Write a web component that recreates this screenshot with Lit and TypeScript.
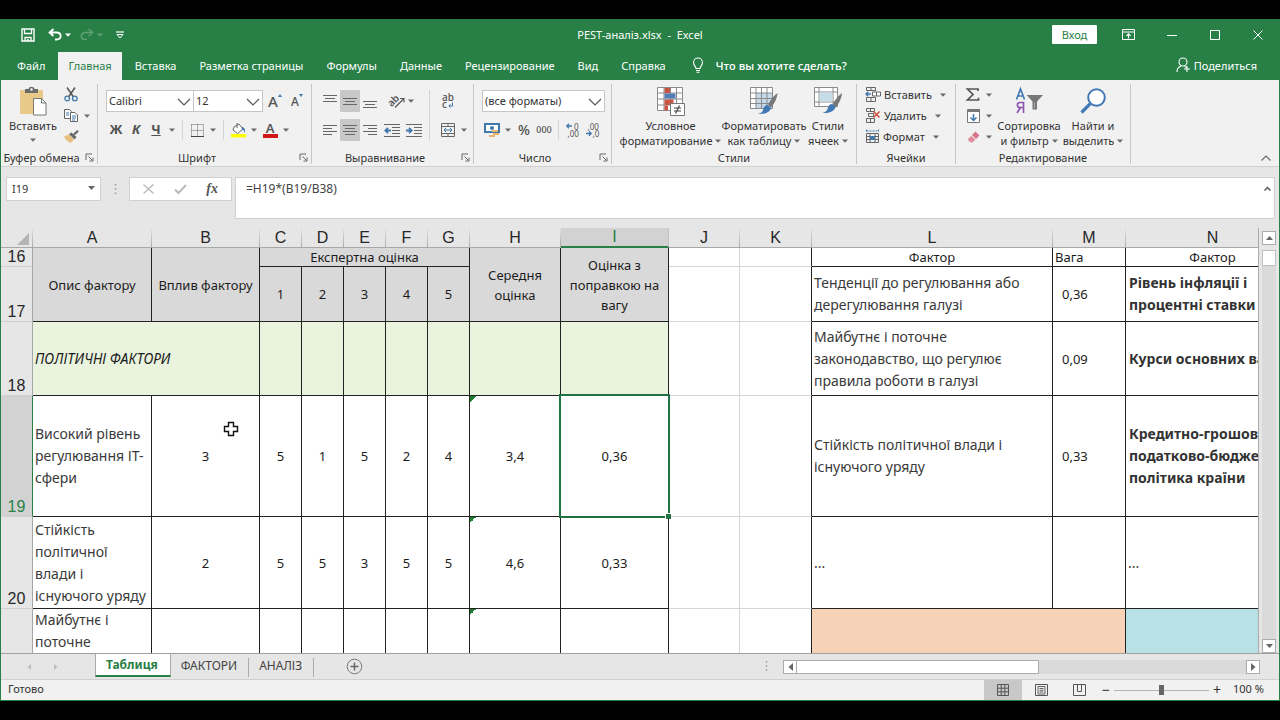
import { LitElement, html, svg, css, nothing } from "lit";
import type { TemplateResult } from "lit";
import { classMap } from "lit/directives/class-map.js";

const icon = (w: number, h: number, body: unknown) =>
  html`<svg class="icon" width=${w} height=${h} viewBox="0 0 ${w} ${h}" fill="none" aria-hidden="true">${body}</svg>`;

const caret = icon(6, 4, svg`<path d="M0 .5h6L3 3.8z" fill="#6a6a6a"/>`);
const caretLight = icon(6, 4, svg`<path d="M0 .5h6L3 3.8z" fill="#fff"/>`);
const caretDim = icon(6, 4, svg`<path d="M0 .5h6L3 3.8z" fill="#5f9f75"/>`);
const chevron = icon(14, 8, svg`<path d="M1 1l6 6 6-6" stroke="#555" stroke-width="1.2"/>`);
const launcher = icon(9, 9, svg`<path d="M1 7V1h6M3.5 3.5l4 4M8 4.500V8H4.500" stroke="#666"/>`);

const I = {
  save: icon(14, 14, svg`<path d="M1 1h12v12H1z" stroke="#fff" stroke-width="1.400"/><path d="M3.500 1v4.500h7V1M4 13V9.500h6V13" stroke="#fff" stroke-width="1.300"/><path d="M6 11h1.500v2H6z" fill="#fff"/>`),
  undo: icon(14, 13, svg`<path d="M5.500 1L1.500 4.500l4 3.500M2 4.500h6.500c5.500 0 5.500 7 0 7H7" stroke="#fff" stroke-width="1.800"/>`),
  redo: icon(14, 13, svg`<path d="M8.500 1l4 3.500-4 3.500M12 4.500H5.500c-5.500 0-5.500 7 0 7H7" stroke="#5f9f75" stroke-width="1.600"/>`),
  custom: icon(8, 8, svg`<path d="M0 1h8" stroke="#fff" stroke-width="1.200"/><path d="M1 3.500h6L4 7z" stroke="#fff"/>`),
  ribbonOpt: icon(13, 11, svg`<path d="M.5.5h12v10H.5zM.5 3h12" stroke="#fff"/><path d="M6.500 9.500V5M4.500 6.800l2-2 2 2" stroke="#fff" stroke-width="1.200"/>`),
  min: icon(10, 10, svg`<path d="M0 5.500h10" stroke="#fff"/>`),
  max: icon(10, 10, svg`<path d="M.5.5h9v9h-9z" stroke="#fff"/>`),
  close: icon(10, 10, svg`<path d="M.5.5l9 9M9.500.5l-9 9" stroke="#fff"/>`),
  bulb: icon(12, 16, svg`<path d="M4 11.500c0-2-2.500-3-2.500-6a4.500 4.500 0 019 0c0 3-2.500 4-2.500 6zM4 13.500h4M4.500 15.300h3" stroke="#fff" stroke-width="1.100"/>`),
  share: icon(15, 16, svg`<circle cx="7" cy="5" r="4" stroke="#fff" stroke-width="1.100"/><path d="M1 15c0-3 1.500-5 4-6M8.500 9.500l2 1M11 9v6M8 12h6" stroke="#fff" stroke-width="1.100"/>`),
  paste: icon(28, 30, svg`<path d="M1 4h23v24H1z" fill="#e8c98a"/><path d="M6 3h3.500c.5-3 5.500-3 6 0H19v4H6z" fill="#6b6b6b"/><circle cx="12.500" cy="3.500" r="1.200" fill="#fff"/><path d="M14.500 12.500h8l4.500 4.500v12H14.500z" fill="#fff" stroke="#777"/><path d="M22.500 12.500V17H27" stroke="#777"/>`),
  cut: icon(14, 15, svg`<path d="M3 .5l6.500 9.500M11 .5L4.500 10" stroke="#555" stroke-width="1.500"/><circle cx="3.200" cy="11.500" r="2.300" stroke="#4178ab" stroke-width="1.300"/><circle cx="10.800" cy="11.500" r="2.300" stroke="#4178ab" stroke-width="1.300"/>`),
  copy: icon(14, 13, svg`<path d="M.5.5h5l2 2v7h-7z" fill="#fff" stroke="#666"/><path d="M2 4h3M2 6h3" stroke="#4178ab"/><path d="M6.500 3.500h4.500l2.500 2.500v6.500h-7z" fill="#fff" stroke="#666"/><path d="M8 7h4M8 9h4M8 11h3" stroke="#4178ab"/>`),
  brush: icon(15, 13, svg`<path d="M0 6.500l5-2 5 5-3.500 3.500C3.500 11.500 1 9.500 0 6.500z" fill="#e8bf7c"/><path d="M5 4l2.500-1.500 5 4.500L10.500 9.500z" fill="#666"/><path d="M10 4.500L14 .8" stroke="#666" stroke-width="2.200"/>`),
  borders: icon(13, 13, svg`<path d="M.5.5h12M.5.5v11M12.500.5v11M6.500.5v11M.5 6.500h12" stroke="#666" stroke-dasharray="1 1"/><path d="M0 12.500h13" stroke="#444"/>`),
  fill: icon(17, 16, svg`<path d="M4 5l5-3 4 5-5.500 4.500L3 8z" fill="#fff" stroke="#666"/><path d="M7 6V1" stroke="#666"/><path d="M12 5c3 .5 3.500 3 2.500 6-.5-2.500-1-3.500-3-4z" fill="#4178ab"/><path d="M1 12h15v3.500H1z" fill="#ffff00"/>`),
  orient: icon(16, 14, svg`<g transform="rotate(-45 6 7)"><text x="-1" y="9" font-size="10" font-weight="600" fill="#555" font-family="Noto Sans, sans-serif">ab</text></g><path d="M6 13.500L14.500 5M11 4.500h4v4" stroke="#555" stroke-width="1.100"/>`),
  wrap: icon(14, 17, svg`<text x="1" y="8" font-size="10" font-weight="500" fill="#555" font-family="Noto Sans, sans-serif">ab</text><text x="1" y="15" font-size="10" font-weight="500" fill="#555" font-family="Noto Sans, sans-serif">c</text><path d="M11.500 9.500V13H8M9.500 11.300L7.800 13l1.700 1.700" stroke="#4178ab"/>`),
  merge: icon(14, 14, svg`<path d="M.5.5h13v13H.5zM.5 3.500h13M.5 10.500h13M7 .5v3M7 10.500v3" stroke="#666"/><path d="M3 7h8M5 5L3 7l2 2M9 5l2 2-2 2" stroke="#4178ab"/>`),
  money: icon(16, 15, svg`<path d="M1 1h14v8H1z" fill="#fff" stroke="#4178ab" stroke-width="2"/><circle cx="8" cy="5" r="2" fill="#4178ab"/><path d="M8 7h6v2H8zM9 10h6v2H9zM5 12h6v2H5z" fill="#e9b870"/>`),
  decInc: icon(14, 14, svg`<path d="M6 3H1M3 .8L.8 3 3 5.200" stroke="#4178ab" stroke-width="1.300"/><text x="8" y="6.500" font-size="8" fill="#555" font-family="Noto Sans, sans-serif">0</text><text x="1.500" y="13.500" font-size="8" fill="#555" font-family="Noto Sans, sans-serif">,00</text>`),
  decDec: icon(14, 14, svg`<text x="1.500" y="6.500" font-size="8" fill="#555" font-family="Noto Sans, sans-serif">,00</text><path d="M0 10.500h5M3 8.300l2.200 2.200L3 12.700" stroke="#4178ab" stroke-width="1.300"/><text x="6.500" y="13.500" font-size="8" fill="#555" font-family="Noto Sans, sans-serif">,0</text>`),
  cond: icon(28, 29, svg`<path d="M.5.5h25v23H.5zM7 .5v23M13.500.5v23M19.500.5v23M.5 6h25M.5 12h25M.5 18h25" fill="#fff" stroke="#8a8a8a"/><path d="M7.500 1h5.500v5H7.500zM7.500 12.500h9V18h-9z" fill="#c95444"/><path d="M7.500 6.500h11v5h-11z" fill="#4f7fb5"/><path d="M7.500 18.500h3.500v5H7.500z" fill="#c95444"/><path d="M13.500 16.500h14v12h-14z" fill="#fff" stroke="#777"/><path d="M17 21h7M17 24h7M22.500 18.500l-4 8" stroke="#444" stroke-width="1.200"/>`),
  fmtTable: icon(29, 28, svg`<path d="M.5.5h22v21H.5z" fill="#fff"/><path d="M6 6h17v16H6z" fill="#c5d9e8"/><path d="M.5.5h22v21H.5zM6 .5v21M11.500.5v21M17 .5v21M.5 6h22M.5 11.500h22M.5 16.500h22" stroke="#8a8a8a"/><path d="M27.500 6c-3 2-8 8-9.500 12l3 2.500C24 17 27 12 27.500 6z" fill="#777"/><path d="M17.500 18l3.500 3c-1 4-6 6.500-13 6 4-1 5-3 5.500-5.500.5-2 2-3.500 4-3.500z" fill="#4178b5"/>`),
  cellStyles: icon(29, 28, svg`<path d="M.5.5h23v19H.5zM5 .5v19M.5 5h23M.5 15h23M19 .5v19" fill="#fff" stroke="#8a8a8a"/><path d="M5.500 5.500h13v9h-13z" fill="#c5dde8"/><path d="M28 6c-3 2-8 8-9.500 12l3 2.500C24.500 17 27.500 12 28 6z" fill="#777"/><path d="M18 17l3.500 3c-1 4-6 6.500-13 6 4-1 5-3 5.500-5.500.5-2 2-3.500 4-3.500z" fill="#4178b5"/>`),
  insert: icon(16, 15, svg`<path d="M1.500.5h9v3h-9zM6 .5v3M1.500 10.500h9v4h-9zM6 10.500v4" stroke="#666"/><path d="M7.500 5h8v4h-8z" fill="#fff" stroke="#666"/><path d="M11.500 5v4" stroke="#666"/><path d="M6 7H1M3.200 4.700L1 7l2.200 2.300" stroke="#4178ab" stroke-width="1.400"/>`),
  remove: icon(16, 15, svg`<path d="M1.500.5h8v3h-8zM5.500.5v3M1.500 10.500h8v4h-8zM5.500 10.500v4M3.500 5.500h5v3h-5z" stroke="#666"/><path d="M8.500 3.500l6 6M14.500 3.500l-6 6" stroke="#cf4a3c" stroke-width="1.500"/>`),
  format: icon(15, 15, svg`<path d="M1.500 2h12M1.500.5v3M13.500.5v3" stroke="#4178ab" stroke-dasharray="2 1"/><path d="M1.500 4.500h12v9h-12zM5 4.500v9M10 4.500v9M1.500 7.500h12M1.500 10.500h12" stroke="#666"/><path d="M5 7h5v4H5z" fill="#4178ab"/>`),
  sum: icon(14, 13, svg`<path d="M12 3V1H1.500L7 6.500 1.500 12H12.500V9.800" stroke="#555" stroke-width="1.700"/>`),
  fillDown: icon(13, 14, svg`<path d="M.5.5h12v13H.5z" fill="#fff" stroke="#777"/><path d="M.5.5h12v2.500H.5z" fill="#777"/><path d="M6.500 5v6.500M3.500 8.500l3 3 3-3" stroke="#4178ab" stroke-width="1.500"/>`),
  eraser: icon(13, 12, svg`<path d="M8.500.5l4 4L9 8 5 4z" fill="#d9738a"/><path d="M4.300 4.700l4 4L5.500 11.500h-2L.5 8.500z" fill="#e08d9f"/>`),
  sort: icon(27, 26, svg`<path d="M.5 11.500L4.500 1l4 10.500M2 8h5" stroke="#4178b5" stroke-width="1.700"/><path d="M7.500 25V14.500H4c-3.500 0-3.500 5 0 5h3.500M4.500 19.500L1 25" stroke="#8a56b0" stroke-width="1.700"/><path d="M10.500 7H27l-6 6.500v8h-4.500v-8z" fill="#777"/><path d="M18.500 14v6" stroke="#aaa"/>`),
  find: icon(26, 26, svg`<circle cx="16.500" cy="9.500" r="8.300" fill="#fff" stroke="#4178b5" stroke-width="2"/><path d="M10.300 15.700L1.500 24.500" stroke="#4178b5" stroke-width="3.200"/>`),
  collapse: icon(10, 6, svg`<path d="M.5 5.500L5 1l4.500 4.500" stroke="#666" stroke-width="1.100"/>`),
  cancel: icon(11, 10, svg`<path d="M.5.5l10 9M10.500.5l-10 9" stroke="#bbb" stroke-width="1.400"/>`),
  accept: icon(13, 10, svg`<path d="M1 5.500l3.500 3.500L12 1" stroke="#bbb" stroke-width="2"/>`),
  plus: icon(17, 17, svg`<circle cx="8.500" cy="8.500" r="7.300" stroke="#777"/><path d="M8.500 4.500v8M4.500 8.500h8" stroke="#666" stroke-width="1.500"/>`),
  dots: icon(3, 11, svg`<path d="M1.500 0v11" stroke="#999" stroke-width="1.500" stroke-dasharray="1.500 2.700"/>`),
  left: icon(5, 8, svg`<path d="M5 0v8L.5 4z" fill="#666"/>`),
  right: icon(5, 8, svg`<path d="M0 0v8l4.500-4z" fill="#666"/>`),
  leftDim: icon(4, 6, svg`<path d="M4 0v6L.5 3z" fill="#bdbdbd"/>`),
  rightDim: icon(4, 6, svg`<path d="M0 0v6l3.500-3z" fill="#bdbdbd"/>`),
  up: icon(7, 4, svg`<path d="M0 4h7L3.500 0z" fill="#666"/>`),
  upOpen: icon(7, 5, svg`<path d="M.5 4.500l3-3 3 3" stroke="#555" stroke-width="1.500"/>`),
  down: icon(7, 4, svg`<path d="M0 0h7L3.500 4z" fill="#666"/>`),
  corner: icon(12, 12, svg`<path d="M12 0v12H0z" fill="#b5b5b5"/>`),
  normal: icon(12, 12, svg`<path d="M.5.5h11v11H.5zM4.200.5v11M7.800.5v11M.5 4.200h11M.5 7.800h11" stroke="#555"/>`),
  page: icon(13, 12, svg`<path d="M.5.5h12v11H.5z" stroke="#555"/><path d="M3 2.500h7v7.500H3zM4.500 4.500h4M4.500 6.300h4M4.500 8h4" stroke="#555" stroke-width=".9"/>`),
  breaks: icon(13, 12, svg`<path d="M.5.5h12v11H.5zM4.500.5v7M8.500.5v7M4.500 7.500h4" stroke="#555"/>`),
  cursor: icon(16, 16, svg`<path d="M5.500 1.500h5v4h4v5h-4v4h-5v-4h-4v-5h4z" fill="#fff" stroke="#111" stroke-width="1.400"/>`),
};

const lines = (spec: [number, number, number][]) =>
  icon(14, 13, spec.map(([y, x, w]) => svg`<path d="M${x} ${y + 0.5}h${w}" stroke="#666"/>`));
const alignTop = lines([[0, 0, 14], [3, 2, 10], [6, 0, 14]]);
const alignMid = lines([[3, 0, 14], [6, 2, 10], [9, 0, 14]]);
const alignBot = lines([[6, 0, 14], [9, 2, 10], [12, 0, 14]]);
const alignLeft = lines([[1, 0, 14], [4, 0, 9], [7, 0, 14], [10, 0, 9]]);
const alignCenter = lines([[1, 0, 14], [4, 2, 10], [7, 0, 14], [10, 2, 10]]);
const alignRight = lines([[1, 0, 14], [4, 5, 9], [7, 0, 14], [10, 5, 9]]);
const indent = (d: string) =>
  icon(16, 13, svg`<path d="M0 .5h16M8 3.500h8M8 6.500h8M8 9.500h8M0 12.500h16" stroke="#666"/><path d=${d} stroke="#4178ab" stroke-width="1.800"/>`);
const indentLess = indent("M7 6.500H1.500M4 3.800L1.300 6.500 4 9.200");
const indentMore = indent("M0 6.500h5.500M3 3.800l2.700 2.700L3 9.200");

interface Cell { t?: string[]; c?: string; cs?: number; rs?: number; extra?: "error" | "cursor" | "selected"; }
interface Row { n: string; h: string; cells: Cell[]; }

const gap: Cell[] = [{ c: "empty" }, { c: "empty edge" }];
const nums = (v: string[]): Cell[] => v.map((x) => ({ t: [x], c: "num" }));

const ROWS: Row[] = [
  { n: "16", h: "r16", cells: [
    { t: ["Опис фактору"], c: "head", rs: 2 }, { t: ["Вплив фактору"], c: "head", rs: 2 },
    { t: ["Експертна оцінка"], c: "head", cs: 5 },
    { t: ["Середня", "оцінка"], c: "head", rs: 2 }, { t: ["Оцінка з", "поправкою на", "вагу"], c: "head", rs: 2 },
    ...gap, { t: ["Фактор"], c: "num" }, { t: ["Вага"], c: "plain" }, { t: ["Фактор"], c: "num" }] },
  { n: "17", h: "r17", cells: [
    ...["1", "2", "3", "4", "5"].map((x) => ({ t: [x], c: "head" })), ...gap,
    { t: ["Тенденції до регулювання або", "дерегулювання галузі"], c: "long" }, { t: ["0,36"], c: "weight" },
    { t: ["Рівень інфляції і", "процентні ставки"], c: "long strong" }] },
  { n: "18", h: "r18", cells: [
    { t: ["ПОЛІТИЧНІ ФАКТОРИ"], c: "section", cs: 2 }, ...Array.from({ length: 7 }, () => ({ c: "section" })), ...gap,
    { t: ["Майбутнє і поточне", "законодавство, що регулює", "правила роботи в галузі"], c: "long" }, { t: ["0,09"], c: "weight" },
    { t: ["Курси основних валют"], c: "long strong" }] },
  { n: "19", h: "r19", cells: [
    { t: ["Високий рівень", "регулювання ІТ-", "сфери"], c: "long" }, { t: ["3"], c: "num", extra: "cursor" },
    ...nums(["5", "1", "5", "2", "4"]), { t: ["3,4"], c: "num", extra: "error" }, { t: ["0,36"], c: "num", extra: "selected" }, ...gap,
    { t: ["Стійкість політичної влади і", "існуючого уряду"], c: "long" }, { t: ["0,33"], c: "weight" },
    { t: ["Кредитно-грошова,", "податково-бюджетна", "політика країни"], c: "long strong" }] },
  { n: "20", h: "r20", cells: [
    { t: ["Стійкість", "політичної", "влади і", "існуючого уряду"], c: "long" }, { t: ["2"], c: "num" },
    ...nums(["5", "5", "3", "5", "5"]), { t: ["4,6"], c: "num", extra: "error" }, { t: ["0,33"], c: "num" }, ...gap,
    { t: ["..."], c: "long" }, {}, { t: ["..."], c: "long" }] },
  { n: "", h: "r21", cells: [
    { t: ["Майбутнє і", "поточне"], c: "long top" }, {}, {}, {}, {}, {}, {}, { extra: "error" }, {}, ...gap,
    { c: "peach", cs: 2 }, { c: "aqua" }] },
];

const COLS = ["A", "B", "C", "D", "E", "F", "G", "H", "I", "J", "K", "L", "M", "N"];
const TABS = ["Файл", "Главная", "Вставка", "Разметка страницы", "Формулы", "Данные", "Рецензирование", "Вид", "Справка"];

class AppRoot extends LitElement {
  static properties = { sheet: { state: true }, tab: { state: true } };
  declare sheet: string;
  declare tab: string;

  constructor() {
    super();
    this.sheet = "Таблиця";
    this.tab = "Главная";
  }

  static styles = css`
    :host { display: flex; flex-direction: column; box-sizing: border-box; height: 100vh; padding: 19px 0; background: #000;
      color: #333; font: 11px/15px "Noto Sans", "Open Sans", sans-serif; --green: #288046; --panel: #f1f1f1; --line: #c6c6c6; }
    *, *::before, *::after { box-sizing: border-box; }
    button, input, select, textarea { font: inherit; color: inherit; margin: 0; padding: 0; border: 0; background: none; border-radius: 0; outline: 0; }
    button { display: flex; align-items: center; justify-content: center; white-space: nowrap; }
    .icon { display: block; flex: none; overflow: visible; }
    .window { flex: 1; min-height: 0; display: flex; flex-direction: column; border: solid var(--green); border-width: 0 1px 1px; background: #e6e6e6; }

    .title { flex: none; height: 33px; display: grid; grid-template-columns: 1fr auto 1fr; align-items: center; background: var(--green); color: #fff; padding-bottom: 2px; }
    .quick { display: flex; align-items: center; padding-left: 20px; }
    .quick button { height: 24px; }
    .quick .q { width: 14px; }
    .quick .save { margin-right: 13px; }
    .quick .drop { width: 12px; }
    .quick .redo { margin-left: 6px; }
    .quick .custom { width: 12px; margin-left: 8px; }
    .name { white-space: pre; }
    .win { display: flex; justify-content: flex-end; align-items: center; }
    .win button { width: 43px; height: 28px; }
    .win .login { width: 45px; height: 19px; margin-right: 10px; background: #fff; color: var(--green); border-radius: 1px; }

    .tabs { flex: none; height: 28px; display: flex; align-items: stretch; gap: 3px; background: var(--green); color: #fff; padding: 0 22px 0 6px; }
    .tabs button { padding: 0 10px 2px; }
    .tabs .on { background: var(--panel); color: var(--green); }
    .tabs .tell { gap: 12px; padding-left: 13px; font-family: "Open Sans", sans-serif; font-weight: 600; }
    .tabs .share { margin-left: auto; padding: 0 0 2px; gap: 3px; }

    .ribbon { flex: none; display: flex; height: 87px; padding: 4px 0 2px; background: var(--panel); border-bottom: 1px solid #d0d0d0; }
    .group { flex: none; display: flex; flex-direction: column; border-right: 1px solid var(--line); }
    .body { flex: 1; display: flex; }
    .foot { flex: none; height: 13px; line-height: 13px; display: flex; text-align: center; }
    .foot span { flex: 1; }
    .foot button { width: 15px; height: 13px; }
    .clip { width: 97px; } .font { width: 214px; } .align { width: 162px; } .number { width: 138px; }
    .styles { width: 245px; } .cells { width: 99px; } .edit { width: 175px; }
    .rows { display: flex; flex-direction: column; gap: 7px; padding-top: 6px; }
    .row { display: flex; height: 22px; align-items: center; }
    .font .rows { padding-left: 8px; }
    .align .rows { padding-left: 8px; }
    .align .rows + .sep + .rows { padding-left: 4px; }
    .number .rows { padding-left: 8px; }
    .tool { width: 20px; height: 22px; }
    .drop { width: 12px; height: 22px; }
    .tool.on { background: #c8c8c8; }
    .tool.turn { width: 25px; justify-content: flex-end; }
    .tool.wide { width: 24px; }
    .sep { width: 1px; height: 20px; margin: 0 4px; background: #d4d4d4; }
    .sep.tall { height: 51px; margin: 6px 4px 0 5px; }
    .glyph { font-size: 13px; font-weight: 700; color: #505050; padding-bottom: 2px; }
    .italic { font-style: italic; }
    .under { text-decoration: underline; }
    .grow { font-size: 15px; font-weight: 500; color: #555; }
    .shrink { font-size: 12px; }
    .grow .icon { align-self: flex-start; margin-top: 4px; }
    .tint { flex-direction: column; font-size: 13px; font-weight: 600; line-height: 12px; color: #555; }
    .tint::after { content: ""; width: 15px; height: 4px; background: #d01818; }
    .pct { font-size: 14px; font-weight: 500; color: #505050; padding-bottom: 1px; }
    .thou { font-size: 9px; font-weight: 500; color: #505050; padding-bottom: 2px; }
    .combo { position: relative; display: flex; height: 22px; background: #fff; border: 1px solid var(--line); }
    .combo select { appearance: none; flex: 1; min-width: 0; padding: 0 20px 2px 2px; font-size: 11px; }
    .combo .icon { position: absolute; right: 2px; top: 7px; pointer-events: none; }
    .combo.face { width: 88px; } .combo.size { width: 70px; margin-left: -1px; } .combo.format { width: 123px; }

    .big { flex-direction: column; justify-content: flex-start; padding-top: 2px; color: #333; }
    .big .pic { height: 30px; margin-bottom: 2px; display: flex; align-items: center; }
    .big .line { display: flex; align-items: center; gap: 3px; }
    .big.paste { width: 56px; margin-left: 4px; }
    .big.paste .caret { height: 14px; display: flex; align-items: center; }
    .stack { display: flex; flex-direction: column; }
    .stack > div { display: flex; height: 21px; align-items: center; }
    .stack .text { justify-content: flex-start; gap: 3px; height: 21px; padding-bottom: 1px; }
    .stack .text + .drop { width: 14px; justify-content: flex-end; }
    .cells .stack { padding-left: 8px; }
    .edit .stack { padding-left: 7px; }
    .styles .body { padding-left: 7px; }
    .b1 { width: 103px; } .b2 { width: 84px; } .b3 { width: 44px; } .b4 { width: 68px; } .b5 { width: 60px; }
    .fold { margin: auto 7px 0 auto; width: 12px; height: 12px; }

    .formula { flex: none; display: flex; align-items: flex-start; padding: 10px 4px 9px 5px; }
    .namebox { position: relative; display: flex; width: 95px; height: 24px; background: #fff; border: 1px solid #d0d0d0; }
    .namebox input { width: 100%; padding: 0 0 2px 5px; }
    .namebox button { position: absolute; right: 2px; top: 0; width: 14px; height: 20px; }
    .grip { height: 24px; width: 28px; display: flex; align-items: center; justify-content: center; }
    .fx { display: flex; width: 103px; height: 24px; padding: 0 3px; background: #fff; border: 1px solid #d0d0d0; }
    .fx button { flex: 1; }
    .fx .fn { font: italic 700 14px "Liberation Serif", serif; color: #555; }
    .entry { flex: 1; display: flex; height: 42px; margin-left: 3px; background: #fff; border: 1px solid #d0d0d0; }
    .entry textarea { flex: 1; resize: none; padding: 2px 10px; font-size: 12px; line-height: 18px; color: #444; overflow: hidden; }
    .entry button { width: 14px; height: 20px; }

    .sheet { flex: 1; min-height: 0; display: flex; }
    .view { flex: 1; min-width: 0; overflow: hidden; border-right: 1px solid #ababab; }
    table { table-layout: fixed; width: 1299px; border-collapse: separate; border-spacing: 0; background: #fff; }
    td, th { padding: 0; border: solid #222; border-width: 0 1px 1px 0; white-space: nowrap; font-weight: 400; position: relative; text-align: left; vertical-align: middle; }
    .rh { width: 32px; } .ca { width: 119px; } .cb { width: 108px; } .c5 { width: 42px; } .ch { width: 91px; } .ci { width: 108px; }
    .cj { width: 71px; } .ck { width: 72px; } .cl { width: 241px; } .cm { width: 73px; } .cn { width: 174px; }
    thead th, tbody th { font-family: "Liberation Sans", sans-serif; font-size: 16px; line-height: 18px; color: #262626; text-align: center; background: #e6e6e6; }
    thead th { height: 20px; padding-top: 1px; border-color: #a6a6a6; border-image: linear-gradient(#e6e6e6, #a6a6a6) 1; }
    thead th .icon { margin: 2px 3px 0 auto; }
    tbody th { vertical-align: bottom; border-color: #a6a6a6; border-bottom-color: #d0d0d0; }
    thead th.cur { padding-top: 0; background: #d2d2d2; color: var(--green); border-image: none; border-bottom: 2px solid var(--green); border-right-color: #c0c0c0; }
    tbody th.cur { background: #d2d2d2; color: var(--green); border-right-color: var(--green); }
    .r16 { height: 19px; } .r17 { height: 55px; } .r18 { height: 74px; } .r19 { height: 121px; } .r20 { height: 92px; } .r21 { height: 92px; }
    td { font-size: 13px; line-height: 18px; color: #1c1c1c; }
    .head { background: #d9d9d9; text-align: center; line-height: 20px; }
    .r16 .head[colspan], .r16 td, .r16 th { line-height: 18px; }
    .r16 .head[rowspan] { line-height: 20px; }
    .num { text-align: center; }
    .plain { padding-left: 2px; }
    .weight { padding-left: 9px; }
    .long { font-size: 14px; line-height: 22px; padding-left: 2px; color: #3a3a3a; }
    .strong { font-weight: 700; padding-left: 3px; color: #333; }
    .top { vertical-align: top; }
    .section { background: #eaf3de; font-size: 14px; font-style: italic; padding-left: 2px; }
    .empty { border-color: #d6d6d6; }
    .edge { border-right-color: #222; }
    .peach { background: #f6d3b6; } .aqua { background: #b8e1e6; }
    .error::before { content: ""; position: absolute; left: 0; top: 0; width: 6px; height: 6px; background: linear-gradient(135deg, #1b7f2e 50%, transparent 50%); }
    .selected::before { content: ""; position: absolute; inset: -2px; border: 2px solid #217346; z-index: 1; }
    .selected::after { content: ""; position: absolute; right: -3px; bottom: -3px; width: 6px; height: 6px; background: #217346; border: solid #fff; border-width: 1px 0 0 1px; z-index: 2; }
    .cursor .icon { position: absolute; left: 71px; top: 25px; }
    .vbar { width: 20px; padding: 3px 3px 0; display: flex; flex-direction: column; }
    .vbar button, .hbar button { flex: none; width: 14px; height: 14px; background: #fff; border: 1px solid #ababab; }
    .vtrack { flex: 1; margin-top: 5px; background: #dadada; }
    .vthumb { height: 16px; background: #fff; border: 1px solid #c0c0c0; }

    .bottom { flex: none; height: 26px; display: flex; align-items: stretch; border-top: 1px solid #a0a0a0; font-size: 12px; color: #444; }
    .nav { width: 94px; display: flex; padding-left: 14px; }
    .nav button { width: 27px; }
    .bottom .name-tab { position: relative; height: 23px; padding: 0 12px 0 10px; }
    .bottom .name-tab::after { content: ""; position: absolute; right: 0; top: 4px; bottom: 0; width: 1px; background: #ababab; }
    .bottom .on { background: #fff; color: var(--green); font-weight: 700; border-bottom: 2px solid var(--green); border-right: 1px solid #ababab; border-left: 1px solid #ababab; }
    .bottom .on::after { content: none; }
    .add { width: 80px; }
    .hbar { margin-left: auto; width: 514px; padding-right: 19px; display: flex; align-items: center; }
    .hbar .hgrip { width: 18px; }
    .htrack { flex: 1; height: 14px; background: #dadada; }
    .hthumb { width: 242px; height: 14px; background: #fff; border: solid #ababab; border-width: 1px 1px 1px 0; }

    .status { flex: none; height: 21px; display: flex; align-items: stretch; background: var(--panel); border-top: 1px solid #d0d0d0; }
    .ready { margin: 0 auto 0 7px; line-height: 18px; }
    .status .mode { width: 38px; }
    .status .mode.on { background: #c8c8c8; }
    .status .zoom { width: 16px; font-size: 14px; padding-bottom: 2px; }
    .range { display: flex; align-items: center; width: 95px; }
    .range input { appearance: none; width: 100%; height: 12px; background: linear-gradient(#b5b5b5, #b5b5b5) center / 100% 1px no-repeat; }
    .range input::-webkit-slider-thumb { appearance: none; width: 5px; height: 10px; background: #666; }
    .percent { width: 54px; padding-left: 8px; line-height: 18px; }
  `;

  private drop(label: string) { return html`<button class="drop" aria-label=${label}>${caret}</button>`; }
  private tool(label: string, body: unknown, cls = "") { return html`<button class="tool ${cls}" aria-label=${label}>${body}</button>`; }
  private foot(label: string, launch = true) {
    return html`<div class="foot"><span>${label}</span>${launch ? html`<button aria-label="${label}: параметры">${launcher}</button>` : nothing}</div>`;
  }
  private combo(cls: string, label: string, value: string) {
    return html`<div class="combo ${cls}"><select aria-label=${label}><option>${value}</option></select>${chevron}</div>`;
  }
  private big(cls: string, pic: TemplateResult, a: string, b: string) {
    return html`<button class="big ${cls}"><span class="pic">${pic}</span><span class="line">${a}</span><span class="line">${b}${caret}</span></button>`;
  }

  private renderRibbon() {
    const sizeUp = icon(4, 3, svg`<path d="M0 3h4L2 0z" fill="#4178ab"/>`);
    const sizeDown = icon(4, 3, svg`<path d="M0 0h4L2 3z" fill="#4178ab"/>`);
    return html`<div class="ribbon">
      <div class="group clip"><div class="body">
        <button class="big paste"><span class="pic">${I.paste}</span><span class="line">Вставить</span><span class="caret">${caret}</span></button>
        <div class="stack">
          <div>${this.tool("Вырезать", I.cut)}</div>
          <div>${this.tool("Копировать", I.copy)}${this.drop("Варианты копирования")}</div>
          <div>${this.tool("Формат по образцу", I.brush)}</div>
        </div></div>${this.foot("Буфер обмена")}</div>

      <div class="group font"><div class="body"><div class="rows">
        <div class="row">${this.combo("face", "Шрифт", "Calibri")}${this.combo("size", "Размер шрифта", "12")}
          ${this.tool("Увеличить размер", html`A${sizeUp}`, "grow wide")}${this.tool("Уменьшить размер", html`A${sizeDown}`, "grow shrink")}</div>
        <div class="row">${this.tool("Полужирный", "Ж", "glyph")}${this.tool("Курсив", "К", "glyph italic")}${this.tool("Подчеркнутый", "Ч", "glyph under")}${this.drop("Вид подчеркивания")}
          <span class="sep"></span>${this.tool("Границы", I.borders)}${this.drop("Виды границ")}
          <span class="sep"></span>${this.tool("Цвет заливки", I.fill)}${this.drop("Выбор заливки")}${this.tool("Цвет текста", "A", "tint")}${this.drop("Выбор цвета")}</div>
      </div></div>${this.foot("Шрифт")}</div>

      <div class="group align"><div class="body"><div class="rows">
        <div class="row">${this.tool("По верхнему краю", alignTop)}${this.tool("Посередине", alignMid, "on")}${this.tool("По нижнему краю", alignBot)}${this.tool("Ориентация", I.orient, "turn")}${this.drop("Виды ориентации")}</div>
        <div class="row">${this.tool("По левому краю", alignLeft)}${this.tool("По центру", alignCenter, "on")}${this.tool("По правому краю", alignRight)}${this.tool("Уменьшить отступ", indentLess, "wide")}${this.tool("Увеличить отступ", indentMore)}</div>
      </div><span class="sep tall"></span><div class="rows">
        <div class="row">${this.tool("Перенести текст", I.wrap)}</div>
        <div class="row">${this.tool("Объединить", I.merge)}${this.drop("Виды объединения")}</div>
      </div></div>${this.foot("Выравнивание")}</div>

      <div class="group number"><div class="body"><div class="rows">
        <div class="row">${this.combo("format", "Числовой формат", "(все форматы)")}</div>
        <div class="row">${this.tool("Денежный формат", I.money)}${this.drop("Валюты")}${this.tool("Процентный формат", "%", "pct")}${this.tool("Разделители", "000", "thou")}
          <span class="sep"></span>${this.tool("Увеличить разрядность", I.decInc)}${this.tool("Уменьшить разрядность", I.decDec)}</div>
      </div></div>${this.foot("Число")}</div>

      <div class="group styles"><div class="body">
        ${this.big("b1", I.cond, "Условное", "форматирование")}${this.big("b2", I.fmtTable, "Форматировать", "как таблицу")}${this.big("b3", I.cellStyles, "Стили", "ячеек")}
      </div>${this.foot("Стили", false)}</div>

      <div class="group cells"><div class="body"><div class="stack">
        <div><button class="text">${I.insert}Вставить</button>${this.drop("Варианты вставки")}</div>
        <div><button class="text">${I.remove}Удалить</button>${this.drop("Варианты удаления")}</div>
        <div><button class="text">${I.format}Формат</button>${this.drop("Варианты формата")}</div>
      </div></div>${this.foot("Ячейки", false)}</div>

      <div class="group edit"><div class="body"><div class="stack">
        <div>${this.tool("Сумма", I.sum)}${this.drop("Функции")}</div>
        <div>${this.tool("Заполнить", I.fillDown)}${this.drop("Варианты заполнения")}</div>
        <div>${this.tool("Очистить", I.eraser)}${this.drop("Варианты очистки")}</div>
      </div>${this.big("b4", I.sort, "Сортировка", "и фильтр")}${this.big("b5", I.find, "Найти и", "выделить")}
      </div>${this.foot("Редактирование", false)}</div>
      <button class="fold" aria-label="Свернуть ленту">${I.collapse}</button>
    </div>`;
  }

  private renderCell(c: Cell) {
    return html`<td class="${c.c ?? ""} ${c.extra ?? ""}" colspan=${c.cs ?? nothing} rowspan=${c.rs ?? nothing}>${(c.t ?? []).map((l, i) => html`${i ? html`<br>` : nothing}${l}`)}${c.extra === "cursor" ? I.cursor : nothing}</td>`;
  }

  private renderGrid() {
    return html`<div class="sheet"><div class="view"><table>
      <colgroup><col class="rh"><col class="ca"><col class="cb"><col class="c5"><col class="c5"><col class="c5"><col class="c5"><col class="c5"><col class="ch"><col class="ci"><col class="cj"><col class="ck"><col class="cl"><col class="cm"><col class="cn"></colgroup>
      <thead><tr><th>${I.corner}</th>${COLS.map((c) => html`<th class=${classMap({ cur: c === "I" })}>${c}</th>`)}</tr></thead>
      <tbody>${ROWS.map((r) => html`<tr class=${r.h}><th class=${classMap({ cur: r.n === "19" })}>${r.n}</th>${r.cells.map((c) => this.renderCell(c))}</tr>`)}</tbody>
    </table></div>
    <div class="vbar"><button aria-label="Вверх">${I.up}</button><div class="vtrack"><div class="vthumb"></div></div><button aria-label="Вниз">${I.down}</button></div></div>`;
  }

  render() {
    return html`<div class="window">
      <header class="title">
        <div class="quick">
          <button class="q save" aria-label="Сохранить">${I.save}</button>
          <button class="q" aria-label="Отменить">${I.undo}</button><button class="drop" aria-label="История отмены">${caretLight}</button>
          <button class="q redo" aria-label="Вернуть">${I.redo}</button><button class="drop" aria-label="История возврата">${caretDim}</button>
          <button class="custom" aria-label="Настройка панели">${I.custom}</button>
        </div>
        <div class="name">PEST-аналіз.xlsx  -  Excel</div>
        <div class="win"><button class="login">Вход</button><button aria-label="Параметры ленты">${I.ribbonOpt}</button><button aria-label="Свернуть">${I.min}</button><button aria-label="Развернуть">${I.max}</button><button aria-label="Закрыть">${I.close}</button></div>
      </header>
      <nav class="tabs">
        ${TABS.map((t) => html`<button class=${classMap({ on: t === this.tab })} @click=${() => (this.tab = t)}>${t}</button>`)}
        <button class="tell">${I.bulb}Что вы хотите сделать?</button>
        <button class="share">${I.share}Поделиться</button>
      </nav>
      ${this.renderRibbon()}
      <div class="formula">
        <div class="namebox"><input aria-label="Имя ячейки" .value=${"I19"}><button aria-label="Список имен">${I.down}</button></div>
        <div class="grip">${I.dots}</div>
        <div class="fx"><button aria-label="Отмена">${I.cancel}</button><button aria-label="Ввод">${I.accept}</button><button class="fn" aria-label="Вставить функцию">fx</button></div>
        <div class="entry"><textarea aria-label="Строка формул" .value=${"=H19*(B19/B38)"}></textarea><button aria-label="Свернуть строку формул">${I.upOpen}</button></div>
      </div>
      ${this.renderGrid()}
      <div class="bottom">
        <div class="nav"><button aria-label="Предыдущий лист">${I.leftDim}</button><button aria-label="Следующий лист">${I.rightDim}</button></div>
        ${["Таблиця", "ФАКТОРИ", "АНАЛІЗ"].map((s) => html`<button class="name-tab ${classMap({ on: s === this.sheet })}" @click=${() => (this.sheet = s)}>${s}</button>`)}
        <button class="add" aria-label="Новый лист">${I.plus}</button>
        <div class="hbar"><span class="hgrip">${I.dots}</span><button aria-label="Влево">${I.left}</button><div class="htrack"><div class="hthumb"></div></div><button aria-label="Вправо">${I.right}</button></div>
      </div>
      <footer class="status">
        <span class="ready">Готово</span>
        <button class="mode on" aria-label="Обычный">${I.normal}</button><button class="mode" aria-label="Разметка страницы">${I.page}</button><button class="mode" aria-label="Страничный">${I.breaks}</button>
        <button class="zoom" aria-label="Уменьшить масштаб">−</button>
        <label class="range"><input type="range" min="0" max="200" .value=${"100"} aria-label="Масштаб"></label>
        <button class="zoom" aria-label="Увеличить масштаб">+</button>
        <span class="percent">100 %</span>
      </footer>
    </div>`;
  }
}
customElements.define("app-root", AppRoot);
